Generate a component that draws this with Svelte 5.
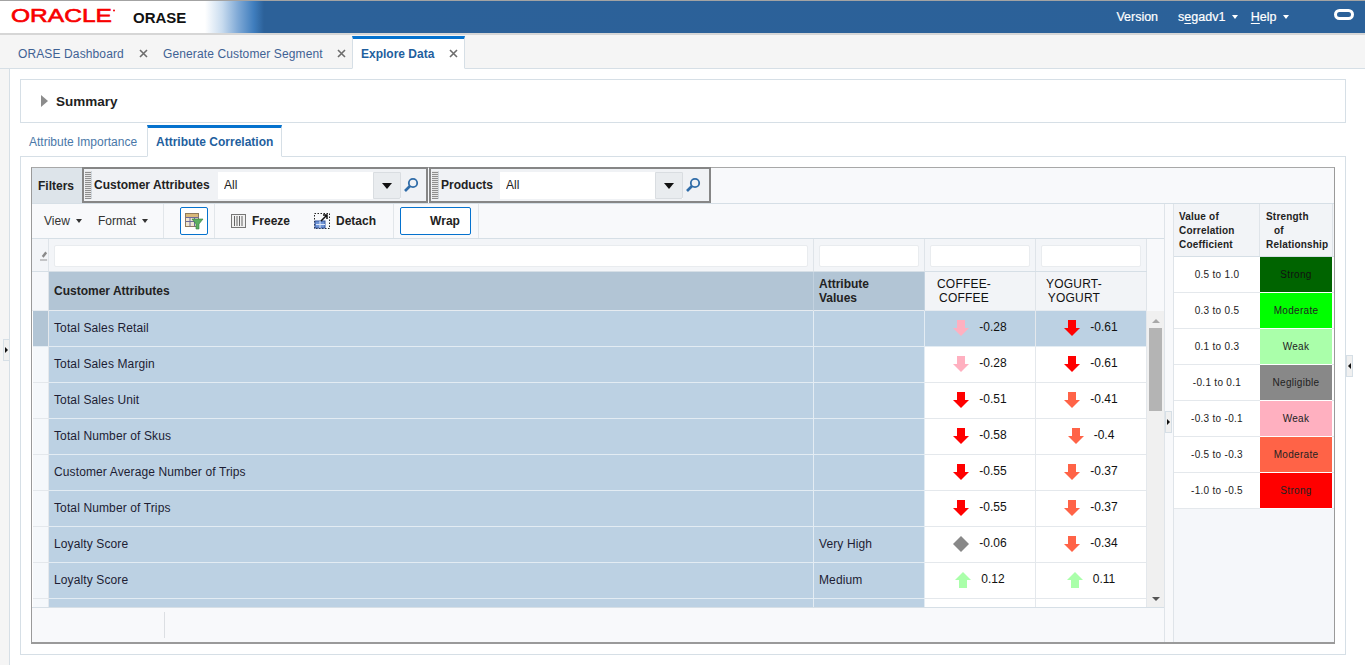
<script>
  const rows = [
    { name: 'Total Sales Retail', val: '', a: ['down', 'pink', '-0.28'], b: ['down', 'red', '-0.61'], sel: true },
    { name: 'Total Sales Margin', val: '', a: ['down', 'pink', '-0.28'], b: ['down', 'red', '-0.61'] },
    { name: 'Total Sales Unit', val: '', a: ['down', 'red', '-0.51'], b: ['down', 'tomato', '-0.41'] },
    { name: 'Total Number of Skus', val: '', a: ['down', 'red', '-0.58'], b: ['down', 'tomato', '-0.4'] },
    { name: 'Customer Average Number of Trips', val: '', a: ['down', 'red', '-0.55'], b: ['down', 'tomato', '-0.37'] },
    { name: 'Total Number of Trips', val: '', a: ['down', 'red', '-0.55'], b: ['down', 'tomato', '-0.37'] },
    { name: 'Loyalty Score', val: 'Very High', a: ['flat', 'gray', '-0.06'], b: ['down', 'tomato', '-0.34'] },
    { name: 'Loyalty Score', val: 'Medium', a: ['up', 'lime', '0.12'], b: ['up', 'lime', '0.11'] }
  ];
  const legend = [
    ['0.5 to 1.0', 'Strong', 'l-dark'],
    ['0.3 to 0.5', 'Moderate', 'l-green'],
    ['0.1 to 0.3', 'Weak', 'l-lime'],
    ['-0.1 to 0.1', 'Negligible', 'l-gray'],
    ['-0.3 to -0.1', 'Weak', 'l-pink'],
    ['-0.5 to -0.3', 'Moderate', 'l-tomato'],
    ['-1.0 to -0.5', 'Strong', 'l-red']
  ];
</script>

{#snippet mark(kind, color)}
  <svg class="mark {color}" width="16" height="16" viewBox="0 0 16 16" aria-hidden="true">
    {#if kind === 'down'}
      <path d="M4 0h8v8h4l-8 8-8-8h4z" />
    {:else if kind === 'up'}
      <path d="M8 0l8 8h-4v8H4V8H0z" />
    {:else}
      <path d="M8 0l8 8-8 8-8-8z" />
    {/if}
  </svg>
{/snippet}

{#snippet close()}
  <svg class="close" width="9" height="9" viewBox="0 0 9 9" aria-hidden="true"><path d="M1 1l7 7M8 1l-7 7" /></svg>
{/snippet}

{#snippet search()}
  <svg class="search" width="16" height="16" viewBox="0 0 16 16" aria-hidden="true">
    <circle cx="10" cy="6" r="4.2" />
    <path d="M7 9l-5 5" class="handle" />
  </svg>
{/snippet}

{#snippet caret()}
  <span class="caret"></span>
{/snippet}

<div class="page">
  <header class="top">
    <div class="brand">
      <svg class="logo" width="108" height="20" viewBox="0 0 108 20" aria-label="Oracle">
        <text x="0" y="16" textLength="101" lengthAdjust="spacingAndGlyphs">ORACLE</text>
        <circle cx="103" cy="4.5" r="1" />
      </svg>
      <span class="app">ORASE</span>
    </div>
    <nav class="global">
      <span class="g1">Version</span>
      <span class="g2">s<u>e</u>gadv1 {@render caret()}</span>
      <span class="g3"><u>H</u>elp {@render caret()}</span>
      <span class="ring"></span>
    </nav>
  </header>

  <nav class="tabs">
    <div class="tab t1"><span>ORASE Dashboard</span>{@render close()}</div>
    <div class="tab t2"><span>Generate Customer Segment</span>{@render close()}</div>
    <div class="tab t3 active"><span>Explore Data</span>{@render close()}</div>
    <div class="tab-rest"></div>
  </nav>

  <main class="content">
    <section class="summary"><span class="tri"></span><h2>Summary</h2></section>

    <nav class="subtabs">
      <div class="sub"><span>Attribute Importance</span></div>
      <div class="sub active"><span>Attribute Correlation</span></div>
      <div class="sub-rest"></div>
    </nav>

    <section class="panel">
      <div class="inner">
        <div class="filters">
          <div class="flabel">Filters</div>
          <div class="fbox fb1">
            <span class="grip"></span>
            <label for="ca">Customer Attributes</label>
            <div class="combo"><input id="ca" value="All" readonly /><span class="drop"><i></i></span></div>
            {@render search()}
          </div>
          <div class="fbox fb2">
            <span class="grip"></span>
            <label for="pr">Products</label>
            <div class="combo"><input id="pr" value="All" readonly /><span class="drop"><i></i></span></div>
            {@render search()}
          </div>
        </div>

        <div class="work">
          <div class="tablearea">
            <div class="toolbar">
              <span class="menu m1">View {@render caret()}</span>
              <span class="menu m2">Format {@render caret()}</span>
              <span class="sep s1"></span>
              <button class="tbtn qbe" aria-label="Query by example">
                <svg width="20" height="18" viewBox="0 0 20 18" aria-hidden="true">
                  <rect x="1.5" y="1.5" width="13" height="13" fill="#efe6d2" stroke="#8f7a5c" />
                  <path d="M2 2h12v3H2z" fill="#d9b97a" />
                  <path d="M1.5 5.5h13M1.5 9.5h13M6 5.5v9M10.500 5.500v9" stroke="#6f6a9c" fill="none" />
                  <path d="M8 7h11l-4 5v5h-3v-5z" fill="#5dae62" stroke="#2f7d3c" stroke-width=".6" />
                </svg>
              </button>
              <span class="sep s2"></span>
              <span class="tool freeze">
                <svg width="15" height="14" viewBox="0 0 15 14" aria-hidden="true">
                  <rect x=".5" y=".5" width="14" height="13" fill="#f2f2f2" stroke="#777" />
                  <path d="M3.5 2v10M6 2v10M8.500 2v10M11 2v10" stroke="#666" fill="none" />
                </svg>
                <b>Freeze</b>
              </span>
              <span class="tool detach">
                <svg width="18" height="18" viewBox="0 0 18 18" aria-hidden="true">
                  <rect x="1.5" y="1.5" width="15" height="15" fill="none" stroke="#222" stroke-dasharray="1.5 1.5" />
                  <rect x="2" y="9" width="10" height="7" fill="#6f94d6" stroke="#35559a" />
                  <path d="M3 12.500h9M7 9v7" stroke="#dfe8f8" />
                  <path d="M8 9l6-6M10 3h4v4" stroke="#111" stroke-width="1.5" fill="none" />
                </svg>
                <b>Detach</b>
              </span>
              <span class="sep s3"></span>
              <button class="tbtn wrap"><b>Wrap</b></button>
              <span class="sep s4"></span>
            </div>

            <div class="grid filterrow">
              <div class="fc rh">
                <svg width="9" height="12" viewBox="0 0 9 12" aria-hidden="true">
                  <path d="M6 1l2 2-4 5-2-2z" fill="#8a8a8a" /><path d="M0 10.500h8" stroke="#888" />
                </svg>
              </div>
              <div class="fc first"><span class="fi"></span></div>
              <div class="fc"><span class="fi"></span></div>
              <div class="fc"><span class="fi"></span></div>
              <div class="fc"><span class="fi"></span></div>
            </div>

            <div class="grid headrow">
              <div class="h rh"></div>
              <div class="h dark">Customer Attributes</div>
              <div class="h dark two">Attribute<br />Values</div>
              <div class="h light"><span class="cen">COFFEE-<br />COFFEE</span></div>
              <div class="h light yog"><span class="cen">YOGURT-<br />YOGURT</span></div>
            </div>

            <div class="bodywrap">
              <div class="rowsclip">
                {#each rows as r}
                  <div class="grid row" class:sel={r.sel}>
                    <div class="c rh"></div>
                    <div class="c blue first">{r.name}</div>
                    <div class="c blue">{r.val}</div>
                    <div class="c num">{@render mark(r.a[0], r.a[1])}<span>{r.a[2]}</span></div>
                    <div class="c num">{@render mark(r.b[0], r.b[1])}<span>{r.b[2]}</span></div>
                  </div>
                {/each}
                <div class="grid row last">
                  <div class="c rh"></div>
                  <div class="c blue first"></div>
                  <div class="c blue"></div>
                  <div class="c num"></div>
                  <div class="c num"></div>
                </div>
              </div>
              <div class="scroll">
                <span class="sup"></span>
                <span class="thumb"></span>
                <span class="sdown"></span>
              </div>
            </div>

            <div class="foot"><span class="footsep"></span></div>
          </div>

          <div class="split"><span class="handle h-mid"><i class="right"></i></span></div>

          <aside class="legend">
            <div class="lhead">
              <div>Value of<br />Correlation<br />Coefficient</div>
              <div class="lh2">Strength<br /><span class="of">of</span><br />Relationship</div>
            </div>
            {#each legend as l}
              <div class="lrow">
                <div class="lval">{l[0]}</div>
                <div class="lcol {l[2]}">{l[1]}</div>
              </div>
            {/each}
          </aside>
        </div>
      </div>
    </section>
  </main>

  <span class="handle h-left"><i class="right"></i></span>
  <span class="handle h-right"><i class="left"></i></span>
</div>

<style>
  :global(body) { margin: 0; background: #fff; overflow: hidden; }
  * { box-sizing: border-box; }
  .page {
    position: relative;
    width: 1365px;
    height: 665px;
    overflow: hidden;
    font-family: "Liberation Sans", Arial, sans-serif;
    font-size: 12px;
    color: #1d1d2b;
    background: #f5f5f5;
    display: flex;
    flex-direction: column;
  }

  /* header */
  .top {
    flex: none;
    height: 35px;
    border-top: 1px solid #a3a3a3;
    border-bottom: 2px solid #d6d6d6;
    background: linear-gradient(90deg, #fff 0, #fff 205px, #c9dcef 222px, #7fa9d6 238px, #3f7dbd 254px, #2c6199 264px, #2b6199 100%);
    display: flex;
    align-items: center;
    justify-content: space-between;
  }
  .brand { display: flex; align-items: center; padding-left: 11px; }
  .logo { display: block; margin-top: -2px; overflow: visible; }
  .logo text { font-family: "Liberation Sans", Arial, sans-serif; font-size: 18.5px; fill: #f80000; stroke: #f80000; stroke-width: .6px; font-weight: 400; }
  .logo circle { fill: #f80000; }
  .app { margin-left: 14px; font-size: 15px; font-weight: 700; color: #111; }
  .global { display: flex; align-items: center; color: #fff; font-size: 12.5px; -webkit-text-stroke: .2px #fff; position: relative; height: 100%; margin-top: -1px; }
  .global u { text-underline-offset: 2px; }
  .g1 { margin-right: 20px; }
  .g2 { margin-right: 13px; }
  .g3 { margin-right: 45px; }
  .caret { display: inline-block; width: 0; height: 0; margin-left: 3px; vertical-align: 2px; border-left: 3.5px solid transparent; border-right: 3.5px solid transparent; border-top: 4px solid currentColor; }
  .ring { width: 20px; height: 11px; border: 3px solid #fff; border-radius: 6px; margin-right: 11px; margin-top: -4px; }

  /* tabs */
  .tabs { flex: none; height: 34px; display: flex; align-items: flex-end; }
  .tab { height: 33px; display: flex; align-items: center; font-size: 12px; color: #3f6294; }
  .tab span { letter-spacing: .12px; }
  .close { fill: none; stroke: #6d6d6d; stroke-width: 1.6; margin-left: 15px; }
  .t1 { padding: 3px 0 0 18px; width: 145px; width: 156px; border-bottom: 1px solid #d6dfe6; }
  .t2 { padding: 3px 0 0 7px; width: 196px; border-bottom: 1px solid #d6dfe6; }
  .t2 .close { margin-left: 14px; }
  .t3 { width: 113px; padding-left: 8px; background: #fff; border-top: 3px solid #0572ce; border-left: 1px solid #d6dfe6; border-right: 1px solid #d6dfe6; border-bottom: 1px solid #fff; color: #1f5f9e; font-weight: 700; }
  .t3 span { letter-spacing: 0; }
  .t3 .close { margin-left: 15px; }
  .tab-rest { flex: 1; height: 1px; background: #d6dfe6; }

  /* content */
  .content { flex: 1; margin-left: 9px; border-left: 1px solid #d6dfe6; background: #fff; padding: 10px 19px 0 10px; display: flex; flex-direction: column; min-height: 0; }
  .summary { flex: none; height: 44px; border: 1px solid #d6dfe6; display: flex; align-items: center; padding-left: 20px; }
  .tri { width: 0; height: 0; border-left: 7px solid #8c8c8c; border-top: 6px solid transparent; border-bottom: 6px solid transparent; margin-right: 8px; margin-top: -1px; }
  .summary h2 { margin: 0; font-size: 13.5px; font-weight: 700; color: #222; }

  .subtabs { flex: none; height: 33px; margin-top: 1px; display: flex; align-items: flex-end; }
  .sub { height: 32px; display: flex; align-items: center; color: #4a78a8; padding: 3px 0 0 9px; width: 127px; border-bottom: 1px solid #d6dfe6; font-size: 12px; }
  .sub.active { width: 135px; padding: 0 0 0 8px; background: #fff; color: #1f5f9e; font-weight: 700; border-top: 3px solid #0572ce; border-left: 1px solid #d6dfe6; border-right: 1px solid #d6dfe6; border-bottom: 1px solid #fff; }
  .sub-rest { flex: 1; height: 1px; background: #d6dfe6; }

  .panel { flex: none; height: 498px; border: 1px solid #d6dfe6; border-top: 0; padding: 10px 10px 10px; }
  .inner { height: 477px; border: 1px solid #9a9a9a; border-top-color: #a8a8a8; border-bottom: 2px solid #9a9a9a; display: flex; flex-direction: column; background: #f8f9fb; }

  /* filters */
  .filters { flex: none; height: 36px; display: flex; border-bottom: 1px solid #d6dfe6; background: #f8f9fb; }
  .flabel { width: 50px; height: 35px; background: #dde4ea; font-weight: 700; display: flex; align-items: center; padding-left: 6px; color: #222; }
  .fbox { height: 36px; border: 2px solid #868686; background: #f0f2f5; display: flex; align-items: center; margin-top: -1px; }
  .fb1 { width: 346px; }
  .fb2 { width: 282px; margin-left: 1px; }
  .grip { width: 7px; height: 28px; margin-left: 1px; background: repeating-linear-gradient(0deg, #8f8f8f 0 1px, #e6e6e6 1px 2px); border-right: 1px solid #cfd6dc; }
  .fbox label { font-weight: 700; margin-left: 2px; color: #222; }
  .fb1 label { width: 124px; }
  .fb2 label { width: 59px; }
  .combo { width: 183px; height: 27px; display: flex; background: #fff; }
  .combo input { width: 155px; border: 0; outline: 0; padding: 0 6px; font: inherit; color: #222; background: #fff; }
  .drop { width: 28px; height: 27px; background: #e9ecef; border: 1px solid #d9dde1; border-radius: 0 0 2px 0; display: flex; align-items: center; justify-content: center; }
  .drop i { width: 0; height: 0; border-left: 5px solid transparent; border-right: 5px solid transparent; border-top: 6px solid #111; margin-top: 2px; }
  .search { margin-left: 2px; fill: none; stroke: #2f6ca8; stroke-width: 1.8; }
  .search .handle { stroke-width: 2.6; stroke: #2f6ca8; }

  /* work area */
  .work { flex: 1; display: flex; min-height: 0; }
  .tablearea { width: 1133px; flex: none; display: flex; flex-direction: column; border-right: 1px solid #dfe4e9; }
  .toolbar { flex: none; height: 35px; display: flex; align-items: center; background: #f8f9fb; border-bottom: 1px solid #d6dfe6; position: relative; padding-left: 12px; }
  .menu { color: #333; }
  .m1 { width: 54px; }
  .m2 { width: 65px; }
  .sep { width: 1px; height: 34px; background: #e2e6ea; }
  .s1 { margin-right: 16px; }
  .s2 { margin-left: 6px; margin-right: 16px; }
  .s3 { margin-left: 17px; margin-right: 6px; }
  .s4 { margin-left: 7px; }
  .tbtn { height: 28px; background: #fff; border: 1px solid #0572ce; border-radius: 2px; padding: 0; font: inherit; color: #222; display: flex; align-items: center; justify-content: center; }
  .qbe { width: 28px; }
  .wrap { width: 71px; padding-left: 19px; }
  .tool { display: flex; align-items: center; color: #222; }
  .freeze { width: 82px; gap: 6px; }
  .detach { gap: 5px; }

  .grid { display: grid; grid-template-columns: 17px 765px 111px 111px 111px; width: 1115px; }
  .filterrow { flex: none; height: 33px; background: #f3f5f8; border-bottom: 1px solid #d6dfe6; }
  .fc { border-right: 1px solid #dfe4e9; display: flex; align-items: center; padding: 1px 5px 0; }
  .fc.rh { padding: 2px 0 0 8px; }
  .fc.first { padding-left: 5px; }
  .fi { flex: 1; height: 22px; background: #fff; border: 1px solid #e9ecef; border-radius: 2px; }

  .headrow { flex: none; height: 39px; font-weight: 700; color: #222; }
  .h { border-right: 1px solid #dfe4e9; border-bottom: 1px solid #e6ebf0; display: flex; align-items: center; padding-left: 5px; }
  .h.rh { background: #f5f7fa; }
  .h.dark { background: #b2c5d5; border-right-color: #c3d2df; }
  .h.two { line-height: 14px; }
  .h.light { background: #f2f4f7; font-weight: 400; line-height: 14px; padding-left: 12px; letter-spacing: .2px; color: #111; }
  .h.light.yog { padding-left: 10px; }
  .cen { display: block; text-align: center; }

  .bodywrap { flex: none; height: 296px; display: flex; background: #fff; }
  .rowsclip { width: 1115px; height: 296px; overflow: hidden; }
  .row { height: 36px; }
  .c { border-bottom: 1px solid #e4e8ec; border-right: 1px solid #e4e8ec; display: flex; align-items: center; }
  .c.rh { background: #f5f8fb; margin-left: 1px; }
  .c.blue { background: #bcd1e3; border-color: #e3ecf3; padding: 0 0 1px 5px; color: #1d1d33; letter-spacing: .12px; }
  .sel .c.rh { background: #b2c5d5; border-bottom-color: #e3ecf3; }
  .sel .num { background: #bcd1e3; border-bottom-color: #e3ecf3; }
  .num { justify-content: center; gap: 10px; padding-bottom: 1px; color: #111; }
  .num span { margin-top: -2px; }
  .mark { display: block; flex: none; }
  .red { fill: #ff0000; }
  .pink { fill: #ffb0c0; }
  .tomato { fill: #ff6347; }
  .lime { fill: #aaffaa; }
  .gray { fill: #888888; }

  .scroll { width: 17px; height: 296px; background: #f0f0f0; position: relative; display: flex; flex-direction: column; align-items: center; }
  .sup { margin-top: 8px; width: 0; height: 0; border-left: 4px solid transparent; border-right: 4px solid transparent; border-bottom: 4px solid #a8a8a8; }
  .thumb { width: 13px; height: 83px; background: #b4b4b4; margin-top: 5px; }
  .sdown { margin-top: auto; margin-bottom: 6px; width: 0; height: 0; border-left: 4px solid transparent; border-right: 4px solid transparent; border-top: 4px solid #555; }

  .foot { flex: 1; border-top: 1px solid #d6dfe6; background: #f8f9fb; display: flex; align-items: center; padding-left: 132px; }
  .footsep { width: 1px; height: 26px; background: #dcdfe3; }

  .split { width: 8px; flex: none; position: relative; background: #f8f9fb; }
  .handle { position: absolute; width: 7px; height: 22px; background: #f0f0f0; border: 1px solid #d6dfe6; display: flex; align-items: center; justify-content: center; }
  .h-mid { left: 0; top: 207px; }
  .h-left { left: 3px; top: 339px; }
  .h-right { left: 1346px; top: 355px; }
  .handle i { width: 0; height: 0; border-top: 3px solid transparent; border-bottom: 3px solid transparent; }
  .handle i.right { border-left: 3px solid #111; }
  .handle i.left { border-right: 3px solid #111; }

  /* legend */
  .legend { width: 161px; flex: none; border-left: 1px solid #dfe4e9; background: #f5f7fa; }
  .lhead { height: 53px; display: grid; grid-template-columns: 86px 73px; background: #f2f4f7; border-bottom: 1px solid #d6dfe6; font-weight: 700; font-size: 10px; line-height: 14px; letter-spacing: .2px; color: #222; }
  .lhead div { padding: 6px 0 0 5px; border-right: 1px solid #dfe4e9; }
  .lhead .lh2 { padding-left: 6px; }
  .of { padding-left: 8px; }
  .lrow { height: 36px; display: grid; grid-template-columns: 86px 72px; background: #fff; border-bottom: 1px solid #e4e8ec; font-size: 10px; letter-spacing: .3px; }
  .lval { display: flex; align-items: center; justify-content: center; color: #222; }
  .lcol { display: flex; align-items: center; justify-content: center; color: #222; margin-bottom: -1px; border-bottom: 1px solid #fff; }
  .l-dark { background: #006400; color: #111; }
  .l-green { background: #00ff00; }
  .l-lime { background: #aaffaa; }
  .l-gray { background: #888888; }
  .l-pink { background: #ffb0c0; }
  .l-tomato { background: #ff6347; }
  .l-red { background: #ff0000; }
</style>
